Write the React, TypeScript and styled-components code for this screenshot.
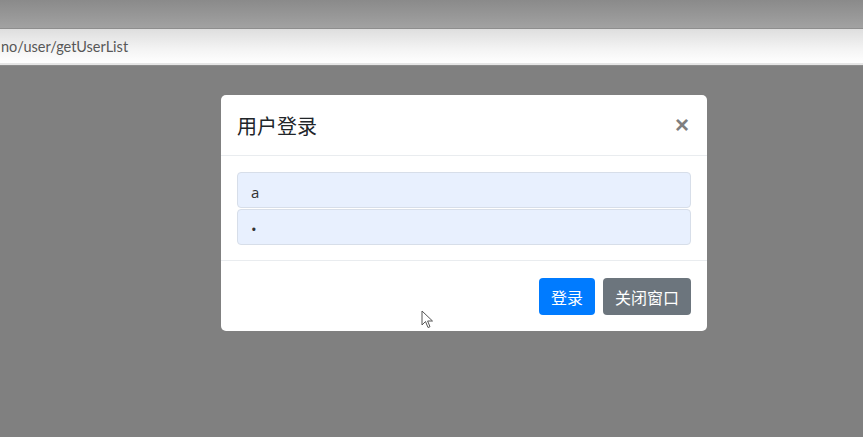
import styled, { createGlobalStyle } from "styled-components";

const GlobalStyle = createGlobalStyle`
  html, body {
    margin: 0;
    padding: 0;
    overflow: hidden;
  }
  body {
    font-family: "Open Sans", "Noto Sans CJK SC", sans-serif;
  }
`;

const Page = styled.div`
  position: relative;
  display: flex;
  flex-direction: column;
  width: 863px;
  height: 437px;
  overflow: hidden;
`;

const Chrome = styled.div`
  height: 28px;
  background: linear-gradient(#8a8a8a, #a2a2a2);
  border-bottom: 1px solid #8e8e8e;
`;

const AddressBar = styled.div`
  display: flex;
  align-items: center;
  height: 34px;
  background: linear-gradient(#dedede, #f4f4f4 60%, #ffffff);
  border-bottom: 2px solid #e6e6e6;
  box-shadow: 0 1px 0 #8c8c8c;
`;

const Url = styled.span`
  margin-left: 1px;
  font-family: Lato, sans-serif;
  font-size: 14.5px;
  color: #575757;
`;

const Backdrop = styled.div`
  flex: 1;
  margin-top: 1px;
  padding: 29px 0 0 221px;
  background: #808080;
`;

const Modal = styled.div`
  width: 486px;
  background: #fff;
  border-radius: 5px;
  font-family: "Noto Sans CJK SC", sans-serif;
`;

const Header = styled.div`
  display: flex;
  align-items: center;
  justify-content: space-between;
  height: 60px;
  padding: 0 18px 0 16px;
  border-bottom: 1px solid #e9ecef;
`;

const Title = styled.h5`
  margin: 0;
  font-size: 20px;
  font-weight: 400;
  color: #212529;
`;

const Close = styled.span`
  font-family: "Liberation Sans", sans-serif;
  font-size: 24px;
  font-weight: 700;
  line-height: 1;
  color: #7f7f7f;
`;

const Body = styled.div`
  display: flex;
  flex-direction: column;
  gap: 1px;
  padding: 16px 16px 15px;
  border-bottom: 1px solid #e9ecef;
`;

const Field = styled.div`
  display: flex;
  align-items: center;
  box-sizing: border-box;
  height: 36px;
  padding: 3px 13px 0;
  background: #e8f0fe;
  border: 1px solid #d7dee9;
  border-radius: 4px;
  font-family: "Open Sans", sans-serif;
  font-size: 15px;
  color: #333;
`;

const Footer = styled.div`
  display: flex;
  justify-content: flex-end;
  gap: 8px;
  padding: 17px 16px 16px;
`;

const Button = styled.button<{ tone: string }>`
  height: 37px;
  padding: 0 12px;
  border: none;
  border-radius: 4px;
  background: ${({ tone }) => tone};
  color: #fff;
  font-family: "Noto Sans CJK SC", sans-serif;
  font-size: 16px;
`;

const Cursor = styled.svg`
  position: absolute;
  left: 421px;
  top: 310px;
`;

export default function App() {
  return (
    <Page>
      <GlobalStyle />
      <Chrome />
      <AddressBar>
        <Url>no/user/getUserList</Url>
      </AddressBar>
      <Backdrop>
        <Modal>
          <Header>
            <Title>用户登录</Title>
            <Close>×</Close>
          </Header>
          <Body>
            <Field>a</Field>
            <Field>•</Field>
          </Body>
          <Footer>
            <Button tone="#007bff">登录</Button>
            <Button tone="#6c757d">关闭窗口</Button>
          </Footer>
        </Modal>
      </Backdrop>
      <Cursor width="14" height="20" viewBox="0 0 14 20">
        <path
          d="M1 1 L1 15 L4.5 11.5 L7 17.5 L9 16.7 L6.6 11 L11.5 11 Z"
          fill="#fff"
          stroke="#555"
          strokeWidth="1"
          strokeLinejoin="round"
        />
      </Cursor>
    </Page>
  );
}
